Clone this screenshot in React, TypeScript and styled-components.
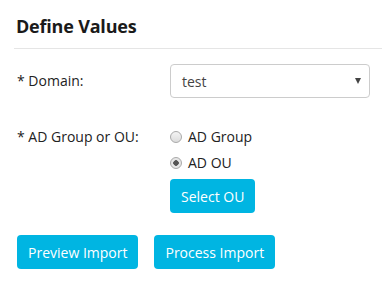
import React, { FC } from "react";
import styled, { createGlobalStyle } from "styled-components";

const GlobalStyle = createGlobalStyle`
  body {
    margin: 0;
    background: #ffffff;
    font-family: "Open Sans", "Noto Sans", sans-serif;
    color: #222;
  }
`;

const App: FC = () => {
  return (
    <>
      <GlobalStyle />
      <Panel>
        <Heading>Define Values</Heading>
        <Form>
          <Row>
            <Label>* Domain:</Label>
            <SelectBox>
              <span>test</span>
              <Caret />
            </SelectBox>
          </Row>
          <Row $top>
            <Label>* AD Group or OU:</Label>
            <Options>
              <RadioLine>
                <Radio />
                <span>AD Group</span>
              </RadioLine>
              <RadioLine>
                <Radio $checked />
                <span>AD OU</span>
              </RadioLine>
              <Button>Select OU</Button>
            </Options>
          </Row>
          <Actions>
            <Button>Preview Import</Button>
            <Button>Process Import</Button>
          </Actions>
        </Form>
      </Panel>
    </>
  );
};

export default App;

const Panel = styled.div`
  padding: 0 0 0 14px;
`;
const Heading = styled.h2`
  margin: 0;
  padding: 14px 0 10px 2px;
  font-size: 18px;
  font-weight: 700;
  color: #1a1a1a;
  border-bottom: 1px solid #e5e5e5;
  letter-spacing: -0.2px;
`;
const Form = styled.div`
  display: flex;
  flex-direction: column;
  padding: 15px 12px 0 3px;
`;
const Row = styled.div<{ $top?: boolean }>`
  display: flex;
  align-items: ${(p) => (p.$top ? "flex-start" : "center")};
  margin-bottom: ${(p) => (p.$top ? "22px" : "29px")};
`;
const Label = styled.div`
  width: 153px;
  font-size: 14px;
  color: #222;
  line-height: 20px;
`;
const SelectBox = styled.div`
  flex: 1;
  height: 34px;
  box-sizing: border-box;
  border: 1px solid #cccccc;
  border-radius: 4px;
  display: flex;
  align-items: center;
  justify-content: space-between;
  padding: 0 8px 0 11px;
  font-size: 14px;
  color: #444;
`;
const Caret = styled.span`
  width: 0;
  height: 0;
  border-left: 3.5px solid transparent;
  border-right: 3.5px solid transparent;
  border-top: 6px solid #444;
`;
const Options = styled.div`
  display: flex;
  flex-direction: column;
  align-items: flex-start;
`;
const RadioLine = styled.div`
  display: flex;
  align-items: center;
  gap: 6px;
  font-size: 14px;
  color: #222;
  line-height: 20px;
  margin-bottom: 6px;
`;
const Radio = styled.span<{ $checked?: boolean }>`
  width: 12px;
  height: 12px;
  box-sizing: border-box;
  border-radius: 50%;
  border: 1px solid #a9a9a9;
  background: ${(p) =>
    p.$checked
      ? "radial-gradient(circle, #555 0 2.5px, #e6e6e6 3px)"
      : "linear-gradient(#f4f4f4, #dcdcdc)"};
`;
const Button = styled.button`
  height: 34px;
  padding: 0 11px;
  border: none;
  border-radius: 4px;
  background: #00b5e2;
  color: #ffffff;
  font-family: "Open Sans", "Noto Sans", sans-serif;
  font-size: 14px;
  cursor: pointer;
`;
const Actions = styled.div`
  display: flex;
  gap: 16px;
`;
